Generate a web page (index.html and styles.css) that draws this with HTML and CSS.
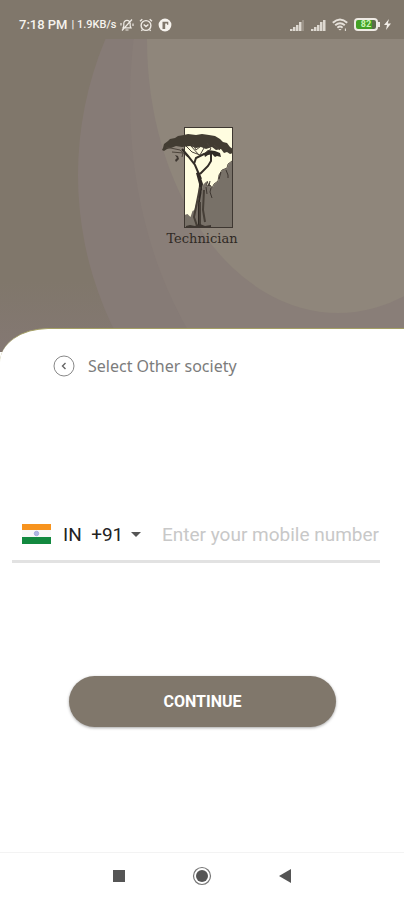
FILE: index.html
```html
<!DOCTYPE html>
<html lang="en">
<head>
    <meta charset="UTF-8">
    <meta name="viewport" content="width=device-width, initial-scale=1.0">
    <title>Technician</title>
    <link rel="stylesheet" href="styles.css">
</head>
<body>
    <header class="hero">
        <!-- Background rings -->
        <svg class="hero-bg" viewBox="0 0 404 352" preserveAspectRatio="none" aria-hidden="true">
            <defs>
                <linearGradient id="base" x1="0" y1="0" x2="0" y2="1">
                    <stop offset=".8" stop-color="#80776b"/>
                    <stop offset="1" stop-color="#847873"/>
                </linearGradient>
            </defs>
            <rect width="404" height="352" fill="url(#base)"/>
            <ellipse cx="428" cy="175" rx="350" ry="350" fill="#867b76"/>
            <ellipse cx="390" cy="100" rx="260" ry="366" fill="#897e78"/>
            <ellipse cx="338" cy="40" rx="191" ry="273" fill="#8f867b"/>
        </svg>

        <div class="status-bar">
            <div class="status-left">
                <span class="clock">7:18 PM</span>
                <span class="net-speed">| 1.9KB/s</span>
                <svg width="14" height="14" viewBox="0 0 14 14" fill="none" stroke="#eeeae4" stroke-width="1.2" aria-hidden="true">
                    <path d="M3 9.800h8L10.200 8V5.500a3.200 3.200 0 0 0-6.400 0V8zM5.500 12h3M12 1.500 2 12.500M1 5v2.500M13 5.500V8"/>
                </svg>
                <svg class="spaced" width="14" height="14" viewBox="0 0 14 14" fill="none" stroke="#eeeae4" stroke-width="1.4" aria-hidden="true">
                    <circle cx="7" cy="7.500" r="4.900"/>
                    <path d="M4.700 6.500 7 8.600l2.400-2.100M1 3.300l2.300-2M13 3.300l-2.300-2M3.400 11.600l-1 1.300M10.600 11.600l1 1.300"/>
                </svg>
                <svg class="spaced" width="14" height="14" viewBox="0 0 14 14" aria-hidden="true">
                    <circle cx="7" cy="7" r="6.400" fill="#f6f3ee"/>
                    <path d="M4.500 11V3.800h5.800v3H9V5.600H7.200V11z" fill="#80776b"/>
                </svg>
            </div>
            <div class="status-right">
                <svg width="15" height="12" viewBox="0 0 15 12" fill="#ddd8d0" aria-hidden="true">
                    <path d="M0 10h2.500v2H0zM3 8h2.500v4H3zM6 6h2.500v6H6zM9 3h2.500v9H9z"/>
                    <path d="M12 1h2v11h-2z" fill="#9a9287"/>
                </svg>
                <svg width="15" height="12" viewBox="0 0 15 12" fill="#ddd8d0" aria-hidden="true">
                    <path d="M0 10h2.500v2H0zM3 8h2.500v4H3zM6 6h2.500v6H6zM9 3h2.500v9H9zM12 1h2.500v11H12z"/>
                </svg>
                <svg width="16" height="13" viewBox="0 0 16 13" fill="none" stroke="#e6e1da" stroke-width="1.9" aria-hidden="true">
                    <path d="M.8 4.800Q8-2 15.200 4.800M3.200 7.300q4.800-4.300 9.600 0M5.400 9.700q2.600-2.200 5.200 0"/>
                    <path d="m6.400 10.900 1.600 1.700 1.600-1.700z" fill="#e6e1da" stroke="none"/>
                    <path d="M13.400 10.500V13" stroke-width="1"/>
                </svg>
                <span class="battery">82</span>
                <svg width="7" height="11" viewBox="0 0 7 11" fill="#f2eee8" aria-hidden="true">
                    <path d="M5 0 0 6h3L2 11l5-6.400H3.800z"/>
                </svg>
            </div>
        </div>

        <div class="brand">
            <svg width="74" height="102" viewBox="0 0 74 102" aria-hidden="true">
                <rect x="22.500" y=".5" width="48" height="100" fill="#fffde0"/>
                <path d="M70.500 34l-4 3-1 4-5 2-3 5-1 6-4 3-2 4-2-3-3 1-1-4-3 2-4 14-3 4-2 8-2 1-2 6-3-3-3 1v12h48z" fill="#787168"/>
                <path d="M70 34l-4 3-1 4-5 2-3 5-1 6-4 3-2 4-2-3-3 1-1-4" stroke="#5b534a" fill="none"/>
                <path d="M64 43l2 5v3M59 45l-2 7M49 61l-1 4 2 6M44 60l1 7M45 54l2 5 1-5" stroke="#3e3731" fill="none"/>
                <rect x="22.500" y=".5" width="48" height="100" fill="none" stroke="#3e3731"/>
                <!-- Canopy -->
                <path d="M1 21l1-4 4-3 2-2 5-1 3-2 6-1 4-1 8 1 6-1 7 1 6 1 5 3 3 3 4 1 3 4 3 2v4l-3 1-3-2-3 1-3-4-5 1-4-3-6 2-5-2-5 1-6-2-8 1-6-1-5 2-4 1-3 2-2-1z" fill="#423c32"/>
                <path d="M42 27l4-4 7 1 5 2 1 4-4-1-2 1-3-3-4 1-3 2z" fill="#302b25"/>
                <path d="M13 28l3 1 1 3-3 3-1-2 2-2z" fill="#3e3731"/>
                <!-- Branches -->
                <path d="M4 20l14 3 8 7M10 25l11 1M24 19l6 6 8 3 4-7M31 17l3 6 5-4M45 16l4 6-9 6M52 18l6 5M37 28l-8-9M21 26l-1 4" stroke="#4b433a" fill="none"/>
                <path d="M20 22l6 7 7 9 6 14M32 37l2-6 8-4 7-1M49 27v7l-3 5-8 8" stroke="#332d27" stroke-width="2" fill="none"/>
                <path d="M37 45l4 12-3 17v24l5 3H33l3-4V79l1-22-3-11z" fill="#302a25"/>
                <path d="M38 60l-4 20-2 10 3 9M38 75v25M42 63l-1 20 2 12" stroke="#463f37" stroke-width="2" fill="none"/>
                <path d="M24 99l4-1 5 1 5-2 5 2 6-1v3H24z" fill="#3e3731"/>
            </svg>
            <h1 class="brand-name">Technician</h1>
        </div>
    </header>

    <main class="sheet">
        <button class="back" type="button">
            <svg width="22" height="22" viewBox="0 0 22 22" fill="none" stroke="#888" aria-hidden="true">
                <circle cx="11" cy="11" r="10"/>
                <path d="M12.500 8 9.500 11l3 3" stroke="#666" stroke-width="1.400"/>
            </svg>
            Select Other society
        </button>

        <form class="login">
            <div class="phone">
                <svg width="29" height="20" viewBox="0 0 29 20" aria-hidden="true">
                    <rect width="29" height="20" fill="#f8f8f8"/>
                    <rect width="29" height="6" fill="#f7931e"/>
                    <rect y="13" width="29" height="7" fill="#12893f"/>
                    <circle cx="14.500" cy="9.500" r="2.200" fill="#b0b7e2" stroke="#a4addf"/>
                </svg>
                <select class="country" aria-label="Country code">
                    <option>IN&nbsp;&nbsp;+91</option>
                </select>
                <svg class="caret" width="10" height="5" viewBox="0 0 10 5" aria-hidden="true">
                    <path d="M0 0h10L5 5z" fill="#555"/>
                </svg>
                <input class="number" type="tel" placeholder="Enter your mobile number" aria-label="Mobile number">
            </div>
            <button class="continue" type="submit">CONTINUE</button>
        </form>
    </main>

    <nav class="nav-bar" aria-label="System">
        <button type="button" aria-label="Recent apps">
            <svg width="20" height="20" viewBox="0 0 20 20"><rect x="4" y="4" width="12" height="12" fill="#555"/></svg>
        </button>
        <button type="button" aria-label="Home">
            <svg width="20" height="20" viewBox="0 0 20 20">
                <circle cx="10" cy="10" r="8.500" fill="none" stroke="#777" stroke-width="1.200"/>
                <circle cx="10" cy="10" r="6" fill="#555"/>
            </svg>
        </button>
        <button type="button" aria-label="Back">
            <svg width="20" height="20" viewBox="0 0 20 20"><path d="M4 10l12-7v14z" fill="#555"/></svg>
        </button>
    </nav>
</body>
</html>
```

FILE: styles.css
```css
* {
    box-sizing: border-box;
}

body {
    margin: 0;
    min-height: 100vh;
    display: flex;
    flex-direction: column;
    background: #fff;
    font-family: Roboto, "Liberation Sans", sans-serif;
}

button,
select,
input {
    font-family: inherit;
    border: none;
    background: none;
    padding: 0;
    margin: 0;
}

svg {
    display: block;
    flex-shrink: 0;
}

/* Header */
.hero {
    position: relative;
    padding-bottom: 103px;
}

.hero-bg {
    position: absolute;
    top: 0;
    left: 0;
    width: 100%;
    height: 100%;
    z-index: -1;
}

.status-bar {
    display: flex;
    justify-content: space-between;
    align-items: center;
    height: 39px;
    padding: 10px 13px 0 19px;
    background: #80776b;
    color: #f6f3ee;
}

.status-left,
.status-right {
    display: flex;
    align-items: center;
}

.status-left {
    gap: 4px;
}

.status-right {
    gap: 6px;
}

.clock {
    font-size: 13px;
    font-weight: 500;
}

.net-speed {
    font-size: 11px;
    font-weight: 500;
}

.spaced {
    margin-left: 1px;
}

.battery {
    position: relative;
    width: 24px;
    height: 13px;
    border: 2px solid #eeeae4;
    border-radius: 4px;
    background: linear-gradient(to right, #43a025 80%, #5c6b4b 80%);
    color: #c8f5b4;
    font-size: 9px;
    font-weight: 700;
    line-height: 9px;
    text-align: center;
}

.battery::after {
    content: "";
    position: absolute;
    top: 2px;
    right: -4px;
    width: 2px;
    height: 5px;
    background: #eeeae4;
}

.brand {
    display: flex;
    flex-direction: column;
    align-items: center;
    padding-top: 88px;
}

.brand svg {
    margin-right: 6px;
}

.brand-name {
    margin: 0;
    font-family: "DejaVu Serif", serif;
    font-size: 13px;
    font-weight: 400;
    line-height: 20px;
    color: #302a25;
}

/* White panel */
.sheet {
    position: relative;
    flex: 1;
    margin-top: -24px;
    padding: 26px 24px 24px 12px;
    border-top: 1px solid #a5a065;
    border-top-left-radius: 48px 34px;
    background: #fff;
}

.back {
    display: flex;
    align-items: center;
    gap: 13px;
    margin-left: 41px;
    font-family: "Noto Sans", sans-serif;
    font-size: 16px;
    line-height: 22px;
    color: #7c7c7c;
}

.login {
    display: flex;
    flex-direction: column;
    margin-top: 131px;
}

.phone {
    display: flex;
    align-items: center;
    height: 55px;
    padding-left: 10px;
    border-bottom: 3px solid #e2e2e2;
}

.country {
    margin-left: 12px;
    appearance: none;
    font-size: 19px;
    color: #222;
}

.caret {
    margin: 0 21px 0 7px;
}

.number {
    flex: 1;
    min-width: 0;
    font-size: 19px;
    color: #222;
    outline: none;
}

.number::placeholder {
    color: #c8c8c8;
    opacity: 1;
}

.continue {
    height: 51px;
    margin: 113px 44px 0 57px;
    border-radius: 26px;
    background: #80776b;
    box-shadow: 0 1px 3px rgba(0, 0, 0, 0.35);
    color: #fff;
    font-size: 16px;
    font-weight: 700;
}

/* Android buttons */
.nav-bar {
    display: flex;
    justify-content: center;
    gap: 63px;
    padding: 13px 0 14px;
    border-top: 1px solid #f3f3f3;
}
```
